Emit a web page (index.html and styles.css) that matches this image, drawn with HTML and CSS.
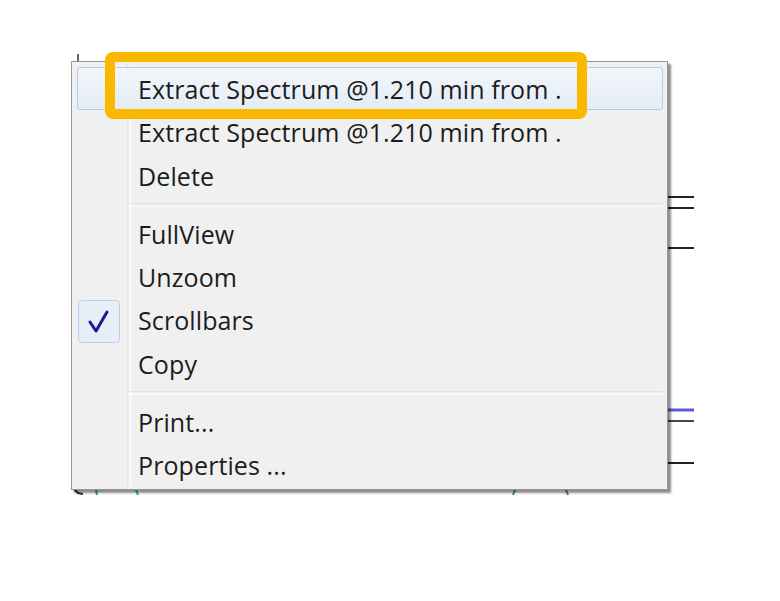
FILE: index.html
```html
<!DOCTYPE html>
<html lang="en">

<head>
    <meta charset="UTF-8">
    <title>Context menu</title>
    <link rel="stylesheet" href="styles.css">
</head>

<body>
    <div class="stage">
        <!-- chart behind the popup -->
        <svg class="chart" width="780" height="601" viewBox="0 0 780 601">
            <line x1="78" y1="54" x2="78" y2="62" stroke="#333" stroke-width="1.5" />
            <line x1="667" y1="197" x2="694" y2="197" stroke="#222" stroke-width="2" />
            <line x1="667" y1="208" x2="694" y2="208" stroke="#222" stroke-width="2" />
            <line x1="667" y1="248" x2="694" y2="248" stroke="#222" stroke-width="2" />
            <line x1="667" y1="410" x2="694" y2="410" stroke="#5a5ad6" stroke-width="3" />
            <line x1="667" y1="421" x2="694" y2="421" stroke="#444" stroke-width="2" />
            <line x1="667" y1="463" x2="694" y2="463" stroke="#222" stroke-width="2" />
            <path d="M73 488 L78 493 L83 494" fill="none" stroke="#333" stroke-width="2" />
            <line x1="96" y1="490" x2="97" y2="495" stroke="#3aa89a" stroke-width="2" />
            <line x1="136" y1="490" x2="138" y2="495" stroke="#3aa89a" stroke-width="2" />
            <line x1="513" y1="495" x2="515" y2="490" stroke="#3a9a3a" stroke-width="2" />
            <line x1="566" y1="490" x2="568" y2="495" stroke="#3a9a3a" stroke-width="2" />
        </svg>

        <div class="menu">
            <div class="item hot">Extract Spectrum @1.210 min from .</div>
            <div class="item">Extract Spectrum @1.210 min from .</div>
            <div class="item">Delete</div>
            <div class="sep"></div>
            <div class="item">FullView</div>
            <div class="item">Unzoom</div>
            <div class="item checked">
                <span class="check">
                    <svg width="26" height="28" viewBox="0 0 26 28">
                        <path d="M4 15 L10 24 L21 5" fill="none" stroke="#1b1b8c" stroke-width="3" stroke-linejoin="round" stroke-linecap="round" />
                    </svg>
                </span>
                Scrollbars
            </div>
            <div class="item">Copy</div>
            <div class="sep"></div>
            <div class="item">Print...</div>
            <div class="item">Properties ...</div>
        </div>

        <div class="callout"></div>
    </div>
</body>

</html>
```

FILE: styles.css
```css
* {
    margin: 0;
    padding: 0;
    box-sizing: border-box;
}

body {
    background: #fff;
    font-family: "Open Sans", "Noto Sans", sans-serif;
}

.stage {
    position: relative;
    width: 780px;
    height: 601px;
}

.chart {
    position: absolute;
    left: 0;
    top: 0;
}

.menu {
    position: absolute;
    left: 71px;
    top: 61px;
    width: 597px;
    height: 429px;
    padding: 5px 4px 2px 5px;
    background: #f0f0f0;
    border: 1px solid #979797;
    box-shadow: 3px 3px 2px rgba(0, 0, 0, 0.45);
    display: flex;
    flex-direction: column;
}

/* icon gutter line */
.menu::before {
    content: "";
    position: absolute;
    top: 2px;
    bottom: 2px;
    left: 55px;
    width: 2px;
    border-left: 1px solid #e2e3e3;
    border-right: 1px solid #fff;
}

.item {
    position: relative;
    height: 43.5px;
    padding-left: 60px;
    display: flex;
    align-items: center;
    font-size: 25px;
    letter-spacing: 0.1px;
    color: #1c1c1c;
    border: 1px solid transparent;
    border-radius: 3px;
}

.item.hot {
    background: linear-gradient(#f2f6fb, #e4ecf6);
    border-color: #b3cce8;
}

.sep {
    height: 14.5px;
    margin-left: 51px;
    display: flex;
    align-items: center;
}

.sep::after {
    content: "";
    width: 100%;
    height: 2px;
    border-top: 1px solid #e0e0e0;
    border-bottom: 1px solid #fff;
}

.check {
    position: absolute;
    left: 0;
    top: 0;
    width: 42px;
    height: 43px;
    display: flex;
    align-items: center;
    justify-content: center;
    background: #e7eef8;
    border: 1px solid #b9d0ea;
    border-radius: 4px;
}

.callout {
    position: absolute;
    left: 105px;
    top: 52px;
    width: 482px;
    height: 67px;
    border: 10px solid #fbb800;
    border-radius: 8px;
}
```
